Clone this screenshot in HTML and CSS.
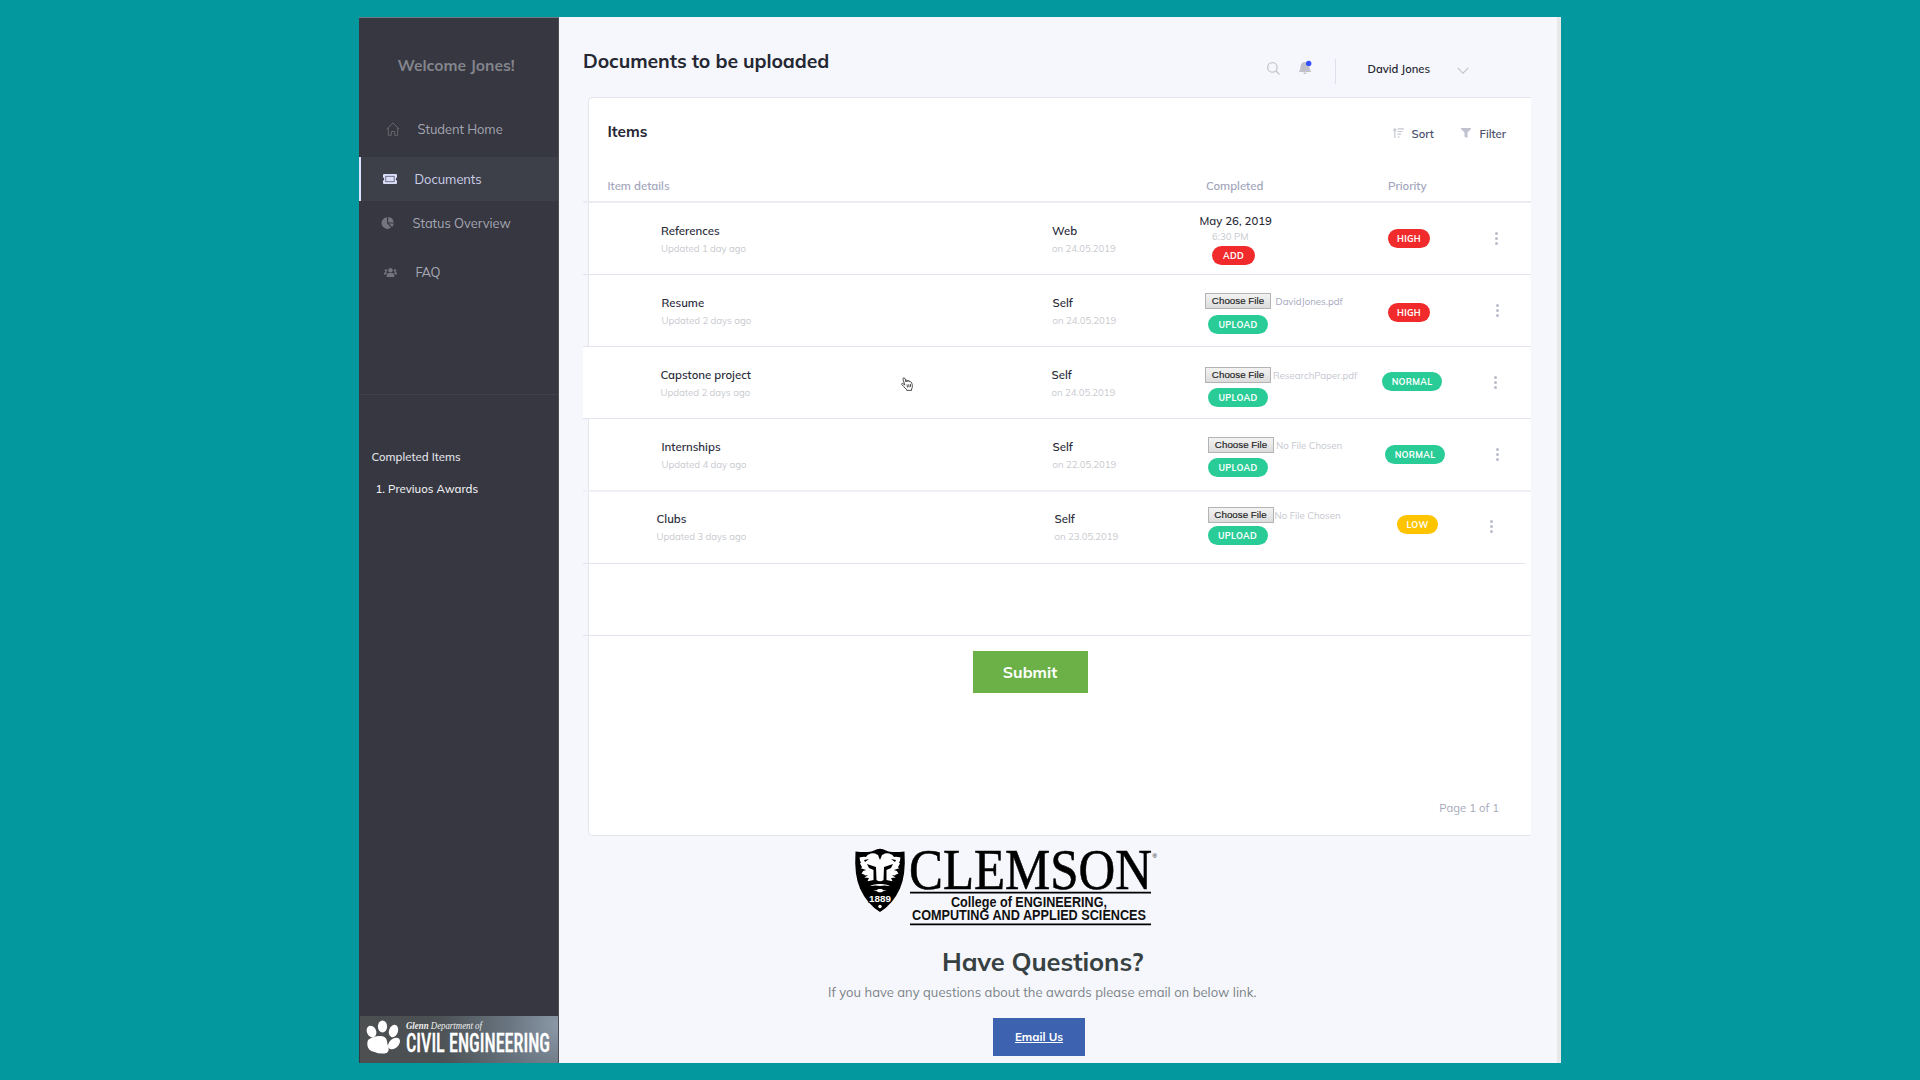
FILE: index.html
```
<!DOCTYPE html>
<html lang="en">
<head>
<meta charset="utf-8">
<title>Documents to be uploaded</title>
<link rel="stylesheet" href="styles.css">
</head>
<body>
<div class="window">
  <aside class="sidebar">
    <div class="welcome">Welcome Jones!</div>
    <nav class="nav">
      <a class="nav-item nav-item--home">
        <svg class="nav-icon" width="14" height="14" viewBox="0 0 14 14" fill="none" stroke="#66676d" stroke-width="1"><path d="M.7 7.2 7 .9l6.300 6.300M2.300 6v7.300h3V9.500h3.400v3.800h3V6"/></svg>
        <span>Student Home</span>
      </a>
      <a class="nav-item nav-item--documents">
        <svg class="nav-icon" width="14" height="10" viewBox="0 0 14 10"><path fill="#d9dcf8" d="M1 0h12q1 0 1 1v2.500q-1.200 0-1.200 1.500T14 6.500V9q0 1-1 1H1q-1 0-1-1V6.500Q1.200 6.500 1.200 5T0 3.500V1q0-1 1-1z"/><rect x="2.800" y="2.300" width="8.400" height="5.400" fill="none" stroke="#5b5c6b" stroke-width=".8"/></svg>
        <span>Documents</span>
      </a>
      <a class="nav-item nav-item--status">
        <svg class="nav-icon" width="13" height="12" viewBox="0 0 13 12" fill="#74757e"><path d="M6 .3v6l4 4.300A5.800 5.800 0 1 1 6 .3z"/><path d="M7.200 0a5.600 5.600 0 0 1 5.500 5.400H7.200z"/><path d="M7.900 6.500h4.800a5.600 5.600 0 0 1-1.600 3.500z"/></svg>
        <span>Status Overview</span>
      </a>
      <a class="nav-item nav-item--faq">
        <svg class="nav-icon" width="13" height="9" viewBox="0 0 13 9" fill="#74757e"><circle cx="6.500" cy="2.300" r="2.200"/><circle cx="2" cy="2.500" r="1.300"/><circle cx="11" cy="2.500" r="1.300"/><path d="M2.700 9V7.300Q3 5 5 5h3q2 0 2.300 2.300V9zM0 6.500V5.300q.3-1.100 1.300-1.100h1.600L2.200 6.500zM13 6.500V5.300q-.3-1.100-1.300-1.100h-1.600l.7 2.300z"/></svg>
        <span>FAQ</span>
      </a>
    </nav>
    <div class="completed">
      <div class="completed-title">Completed Items</div>
      <div class="completed-item">1. Previuos Awards</div>
    </div>
    <div class="department">
      <svg width="198" height="47" viewBox="0 0 198 47">
        <g fill="#fff">
          <ellipse cx="11.500" cy="15.500" rx="4.600" ry="6" transform="rotate(-25 11.500 15.500)"/>
          <ellipse cx="22.500" cy="10.500" rx="4.600" ry="6"/>
          <ellipse cx="33.500" cy="15" rx="4.500" ry="6.300" transform="rotate(20 33.500 15)"/>
          <ellipse cx="34" cy="27.500" rx="4.600" ry="7" transform="rotate(48 34 27.500)"/>
          <path d="M8 24q5-4 12-4 6 0 7 5 0 3 1.500 6 1 6-4 6.500-6 .5-10-1.500-6-1-7-6-.5-4 .5-6z"/>
        </g>
        <text class="dept-small" x="46" y="12.500" textLength="76" lengthAdjust="spacingAndGlyphs"><tspan class="dept-bold">Glenn</tspan> Department of</text>
        <text class="dept-large" x="46" y="36" textLength="144" lengthAdjust="spacingAndGlyphs">CIVIL ENGINEERING</text>
      </svg>
    </div>
  </aside>
  <main class="main">
    <header class="header">
      <h1 class="page-title">Documents to be uploaded</h1>
      <div class="tools">
        <svg class="search" width="13" height="13" viewBox="0 0 13 13" fill="none" stroke="#c5c6cc" stroke-width="1.300"><circle cx="5.400" cy="5.400" r="4.700"/><path d="m8.800 8.800 3.700 3.700"/></svg>
        <svg class="bell" width="14" height="15" viewBox="0 0 14 15"><path fill="#c1c2c9" d="M5.500 2q5 0 5 5 0 3 1.500 4.300v.7H0v-.7Q1.500 10 1.500 7q0-4.500 4-5zM4.200 12.500h3.500q-.3 1.500-1.700 1.500t-1.800-1.500z"/><circle cx="9.700" cy="3.400" r="2.700" fill="#3751ff"/></svg>
        <span class="tool-divider"></span>
        <span class="user">David Jones</span>
        <svg class="chevron" width="12" height="8" viewBox="0 0 12 8" fill="none" stroke="#c5c6cc" stroke-width="1.200"><path d="m.7.900 5.300 5.300L11.300.900"/></svg>
      </div>
    </header>
    <section class="card">
      <div class="card-head">
        <h2 class="card-title">Items</h2>
        <svg class="sort-icon" width="11" height="10" viewBox="0 0 11 10" fill="none" stroke="#c5c7d2" stroke-width="1.200"><path d="M1.800 10V1M.3 2.500 1.800.800l1.500 1.700M4.500.800H11M4.500 3.500h5M4.500 6.200h3.500M4.500 9h2.200"/></svg>
        <span class="action action--sort">Sort</span>
        <svg class="filter-icon" width="10" height="10" viewBox="0 0 10 10" fill="#c0c2cf"><path d="M0 0h10v1L6.500 4.500V10l-3-1.200V4.500L0 1z"/></svg>
        <span class="action">Filter</span>
      </div>
      <div class="table">
        <div class="row row--head">
          <span class="th th--details">Item details</span><span></span><span class="th th--completed">Completed</span><span class="th th--priority">Priority</span>
        </div>
        <div class="row row--references">
          <div class="cell cell--name"><div class="name">References</div><div class="sub">Updated 1 day ago</div></div>
          <div class="cell cell--source"><div class="name">Web</div><div class="sub">on 24.05.2019</div></div>
          <div class="cell cell--file"><div class="date">May 26, 2019</div><div class="time">6:30 PM</div><span class="pill pill--red">ADD</span></div>
          <div class="cell cell--priority"><span class="pill pill--red">HIGH</span></div>
          <div class="cell cell--menu"><i></i><i></i><i></i></div>
        </div>
        <div class="row row--resume">
          <div class="cell cell--name"><div class="name">Resume</div><div class="sub">Updated 2 days ago</div></div>
          <div class="cell cell--source"><div class="name">Self</div><div class="sub">on 24.05.2019</div></div>
          <div class="cell cell--file"><div class="picker"><span class="choose">Choose File</span><span class="filename filename--dark">DavidJones.pdf</span></div><span class="pill pill--green">UPLOAD</span></div>
          <div class="cell cell--priority"><span class="pill pill--red">HIGH</span></div>
          <div class="cell cell--menu"><i></i><i></i><i></i></div>
        </div>
        <div class="row row--capstone">
          <div class="cell cell--name"><div class="name">Capstone project</div><div class="sub">Updated 2 days ago</div></div>
          <div class="cell cell--source"><div class="name">Self</div><div class="sub">on 24.05.2019</div></div>
          <div class="cell cell--file"><div class="picker"><span class="choose">Choose File</span><span class="filename">ResearchPaper.pdf</span></div><span class="pill pill--green">UPLOAD</span></div>
          <div class="cell cell--priority"><span class="pill pill--green">NORMAL</span></div>
          <div class="cell cell--menu"><i></i><i></i><i></i></div>
          <svg class="pointer" width="13" height="14" viewBox="0 0 13 14" fill="#fff" stroke="#3c3c40" stroke-width=".9" stroke-linejoin="round"><path d="M3.800 8 2 2.300Q1.800.800 3 .800q.8 0 1.100 1L5.200 5l-.3-1.500q1-.9 1.700.2l.3 1-.1-1q1.200-.7 1.700.3l.3 1q1.200-.7 1.700.4.900 2.300.9 4.100 0 1.500-.9 2.500l.1 1.400H5.700L5.500 12.300Q3.500 11 2.600 9.300L.8 7.500q-.4-1.200.8-1.200z"/><path d="m6 7.500.5 3M7.700 7.300l.4 3M9.300 7l.3 3" /></svg>
        </div>
        <div class="row row--internships">
          <div class="cell cell--name"><div class="name">Internships</div><div class="sub">Updated 4 day ago</div></div>
          <div class="cell cell--source"><div class="name">Self</div><div class="sub">on 22.05.2019</div></div>
          <div class="cell cell--file"><div class="picker"><span class="choose">Choose File</span><span class="filename">No File Chosen</span></div><span class="pill pill--green">UPLOAD</span></div>
          <div class="cell cell--priority"><span class="pill pill--green">NORMAL</span></div>
          <div class="cell cell--menu"><i></i><i></i><i></i></div>
        </div>
        <div class="row row--clubs">
          <div class="cell cell--name"><div class="name">Clubs</div><div class="sub">Updated 3 days ago</div></div>
          <div class="cell cell--source"><div class="name">Self</div><div class="sub">on 23.05.2019</div></div>
          <div class="cell cell--file"><div class="picker"><span class="choose">Choose File</span><span class="filename">No File Chosen</span></div><span class="pill pill--green">UPLOAD</span></div>
          <div class="cell cell--priority"><span class="pill pill--yellow">LOW</span></div>
          <div class="cell cell--menu"><i></i><i></i><i></i></div>
        </div>
        <div class="row row--empty"></div>
      </div>
      <div class="submit">Submit</div>
      <div class="paging">Page 1 of 1</div>
    </section>
    <footer class="footer">
      <svg class="logo" width="304" height="80" viewBox="0 0 304 80">
        <path d="M.5 3.500Q14 5 19 2.500q6-3.500 12 0Q36 5 49.500 3.500q1.500 24-4.500 37Q38 56 25 64 12 56 5 40.500-1 27 .5 3.500z"/>
        <path fill="#fff" d="M4.500 9.500q4-1 6.500-.5 3-4.500 9-3.500l3 1.500 2 5 2-5 3-1.500q6-1 9 3.500 2.500-.5 6.500.5-.3 3.500-1.500 5l1 1-2 3.500 1.500 2-2.500 2.500 1.500 2-3.500 1.500 1 2.500-5 .5 1.500 3-6 .5L36 40H14l4.500-6.500-6-.5 1.500-3-5-.5 1-2.500-3.500-1.500 1.500-2-2.500-2.500 1.500-2-2-3.500 1-1q-1.200-1.500-1.500-5z"/>
        <path d="m12 16 9 3 .5 13q3.500 2.500 7 0l.5-13 9-3-2 4-4.500 2v10l4.500 1 1 5.500q-6-3-12-2.500-6-.5-12 2.500l1-5.500 4.500-1V22L14 20z"/>
        <path d="m5 20 6 2-4 1.500zM45 20l-6 2 4 1.500zM7 28l6-1-4 3zM43 28l-6-1 4 3zM9 12l5-1-4 3zM41 12l-5-1 4 3z"/>
        <path d="M11 39.500q7-3 14-1.500 7-1.500 14 1.500L35 46H15z"/>
        <path fill="#fff" d="M18 42.500q4 0 5.500-1.500h3q1.500 1.500 5.500 1.500-4 0-5.500 1.700h-3Q22 42.500 18 42.500z"/>
        <circle cx="25" cy="58.500" r="1.700" fill="#fff"/>
        <text class="logo-year" x="25" y="54" textLength="22" lengthAdjust="spacingAndGlyphs" text-anchor="middle">1889</text>
        <text class="logo-name" x="54" y="41" textLength="243" lengthAdjust="spacingAndGlyphs">CLEMSON</text>
        <text class="logo-mark" x="297.500" y="10">®</text>
        <path d="M55 43.700h241v1.800H55zM55 75.400h241v1.800H55z"/>
        <text class="logo-sub" x="96" y="58.700" textLength="156" lengthAdjust="spacingAndGlyphs">College of ENGINEERING,</text>
        <text class="logo-sub" x="57" y="72" textLength="234" lengthAdjust="spacingAndGlyphs">COMPUTING AND APPLIED SCIENCES</text>
      </svg>
      <h2 class="question">Have Questions?</h2>
      <p class="question-text">If you have any questions about the awards please email on below link.</p>
      <a class="email">Email Us</a>
    </footer>
  </main>
</div>
</body>
</html>
```
FILE: styles.css
```
* { box-sizing: border-box; }
body {
  margin: 0;
  height: 1080px;
  overflow: hidden;
  padding: 17px 359px;
  background: #03989e;
  font-family: Mulish, Lato, sans-serif;
  white-space: nowrap;
}
h1, h2, p { margin: 0; }
svg { display: block; flex: none; }
.window { display: flex; height: 1046px; background: #f6f7fc; border-right: 4px solid #e8e8e9; width: 1202px; }

.sidebar { display: flex; flex-direction: column; width: 200px; background: #363740; border-top: 1px solid #6d7c85; border-right: 1px solid #4b4c54; }
.welcome { padding: 37px 0 0 38.500px; font-size: 15.600px; line-height: 20px; font-weight: 700; color: #84858d; letter-spacing: -.02px; }
.nav { height: 288px; margin-top: 32px; border-bottom: 1px solid #3f4049; }
.nav-item { display: flex; align-items: center; height: 44px; font-size: 12.900px; color: #a4a6b3; font-weight: 400; letter-spacing: -.05px; }
.nav-item--home { padding-left: 27px; height: 44px; gap: 17.500px; margin-bottom: 6px; }
.nav-item--documents { padding-left: 22px; height: 44px; gap: 17.500px; border-left: 2px solid #dde2ff; background: #3e4049; color: #ccd0eb; }
.nav-item--status { padding-left: 22px; gap: 18.500px; }
.nav-item--faq { padding-left: 25px; gap: 18.500px; margin-top: 5px; letter-spacing: -.4px; }
.completed { padding: 54px 0 0 12.500px; font-size: 11.400px; line-height: 16px; font-weight: 500; color: #e4e4ea; letter-spacing: .02px; }
.completed-title { margin-bottom: 16px; }
.completed-item { padding-left: 4px; color: #f0f0f4; }
.department { margin: auto 0 0 1px; background: radial-gradient(circle at 100% 20%, #8b98a6 0, #68747f 25%, #4b5154 60%, #4d4f50 100%); }
.dept-small { font: italic 10px "Liberation Serif", serif; fill: #f0f0f0; }
.dept-bold { font-weight: 700; }
.dept-large { font: 500 26px "Roboto Condensed", "Liberation Sans", sans-serif; fill: #fff; stroke: #fff; stroke-width: .3px; }

.main { width: 998px; padding: 0 26px 0 24px; display: flex; flex-direction: column; }
.header { display: flex; justify-content: space-between; align-items: flex-start; height: 80px; }
.page-title { margin-top: 31.500px; font-size: 19.400px; line-height: 24px; font-weight: 700; color: #252733; letter-spacing: -.1px; }
.tools { display: flex; align-items: flex-start; width: 264px; height: 25px; margin-top: 42px; }
.search { margin-top: 2.500px; }
.bell { margin: 1px 0 0 18.500px; }
.tool-divider { width: 1px; height: 25px; margin-left: 22px; background: #dfe0eb; }
.user { width: 63px; margin: 2px 0 0 32px; font-size: 11.200px; line-height: 16px; font-weight: 600; color: #252733; }
.chevron { margin: 8px 0 0 26.500px; }

.card { height: 739px; margin-left: 5px; background: #fff; border: 1px solid #e3e4ec; border-right: 0; border-radius: 5px 0 0 5px; }
.card-head { display: flex; align-items: flex-start; height: 72px; padding: 24px 25px 0 18.500px; }
.card-title { flex: 1; font-size: 15.300px; line-height: 20px; font-weight: 700; color: #252733; }
.action { font-size: 11.300px; line-height: 16px; margin-top: 4px; font-weight: 600; color: #4b506d; }
.sort-icon { margin: 6px 7px 0 0; }
.filter-icon { margin: 6px 8px 0 0; }
.action--sort { width: 50px; }

.table { margin-left: -6px; }
.row { position: relative; display: grid; grid-template-columns: 469px 147px 183px 109px 1fr; height: 72px; border-bottom: 1px solid #e1e3ef; }
.row--head { height: 33px; border-bottom: 2px solid #eaebf3; font-size: 11.400px; line-height: 16px; font-weight: 600; color: #a2a5bb; padding-top: 8px; }
.th--details { padding-left: 24.500px; }
.th--completed { padding-left: 7px; }
.th--priority { padding-left: 6px; }
.row--capstone { background: #fff; }
.row--internships { height: 73px; border-bottom: 2px solid #eff0f6; }
.cell--name, .cell--source { padding-top: 20px; }
.cell--name { padding-left: 78px; }
.name { font-size: 11.400px; line-height: 16px; font-weight: 600; color: #2b2d3b; }
.sub { font-size: 9.600px; line-height: 16px; margin-top: 1px; color: #c9cad0; letter-spacing: -.02px; }
.date { padding: 10px 0 0 .5px; font-size: 11.400px; line-height: 16px; font-weight: 500; color: #252733; }
.time { padding-left: 13px; font-size: 9.600px; line-height: 14px; color: #c9cad0; }
.pill { display: block; width: max-content; height: 19px; padding: 0 10.200px; border-radius: 10px; font-size: 8.800px; line-height: 19px; font-weight: 700; letter-spacing: .3px; color: #fff; }
.pill--red { background: #f12b2c; }
.pill--green { background: #29cc97; }
.pill--yellow { background: #fec400; }
.picker { display: flex; align-items: center; height: 16px; }
.choose { width: 66px; height: 16px; border: 1px solid #b3b3b3; background: linear-gradient(#f3f3f3, #dcdcdc); font: 9.800px/14px "Liberation Sans", Arial, sans-serif; color: #222; text-align: center; -webkit-text-stroke: .15px #222; }
.filename { margin-left: 2px; font-size: 9.600px; line-height: 16px; color: #c6c8d0; }
.filename--dark { color: #a5a8be; margin-left: 4.500px; }
.cell--menu { display: flex; flex-direction: column; gap: 2px; }
.cell--menu i { width: 3px; height: 3px; border-radius: 50%; background: #b9bbc8; }

.cell--priority .pill { width: 60px; padding: 0; text-align: center; }
.cell--priority .pill--red { width: 42px; }
.cell--priority .pill--yellow { width: 41px; }
.cell--file .pill { width: 60px; padding: 0; text-align: center; }
.cell--file .pill--red { width: 43px; }

.row--references .cell--file .pill { margin: 3px 0 0 13px; }
.row--references .cell--priority { padding: 26px 0 0 6px; }
.row--references .cell--menu { padding: 29px 0 0 3.500px; }

.row--resume .cell--name { padding-left: 78.500px; }
.row--resume .cell--source { padding-left: .5px; }
.row--resume .cell--file { padding: 18px 0 0 6px; }
.row--resume .cell--file .pill { margin: 6px 0 0 3px; }
.row--resume .cell--priority { padding: 28px 0 0 6px; }
.row--resume .cell--menu { padding: 29px 0 0 4.500px; }

.row--capstone .cell--name { padding-left: 77.500px; }
.row--capstone .cell--source { margin-left: -.5px; }
.row--capstone .cell--file { padding: 20px 0 0 6px; }
.row--capstone .cell--file .pill { margin: 5px 0 0 3px; }
.row--capstone .cell--priority { padding-top: 25px; }
.row--capstone .cell--menu { padding: 29px 0 0 2.500px; }

.row--internships .cell--name { padding-left: 78.500px; }
.row--internships .cell--source { padding-left: .5px; }
.row--internships .cell--file { padding: 18px 0 0 9px; }
.row--internships .cell--file .pill { margin-top: 5px; }
.row--internships .cell--priority { padding: 26px 0 0 3px; }
.row--internships .cell--menu { padding: 29px 0 0 4.500px; }

.row--clubs { width: 942px; }
.row--clubs .cell--name { padding: 19px 0 0 73.500px; }
.row--clubs .cell--source { padding: 19px 0 0 2.500px; }
.row--clubs .cell--file { padding: 15px 0 0 8.500px; }
.row--clubs .cell--file .filename { margin-left: 1px; }
.row--clubs .cell--file .pill { margin-top: 3px; }
.row--clubs .cell--priority { padding: 23px 0 0 15px; }
.row--clubs .cell--menu { padding-top: 28px; margin-left: -1px; }

.pointer { position: absolute; left: 318px; top: 30px; }

.submit { width: 115px; height: 42px; margin: 15px 0 0 383.500px; background: #6cb147; color: #fff; font-size: 16px; line-height: 42px; font-weight: 700; text-align: center; }
.paging { margin-top: 107px; padding-right: 32px; text-align: right; font-size: 11.300px; line-height: 16px; color: #a6a8ba; letter-spacing: .02px; }

.footer { display: flex; flex-direction: column; }
.logo { margin: 12px 0 0 272px; overflow: visible; }
.logo-year { font: 700 9px "Liberation Sans", sans-serif; fill: #fff; stroke: #000; stroke-width: 2px; paint-order: stroke; }
.logo-name { font: 58px "Liberation Serif", serif; stroke: #000; stroke-width: .6px; }
.logo-mark { font: 6px "Liberation Sans", sans-serif; }
.logo-sub { font: 700 14px "Liberation Sans", sans-serif; fill: #111; }
.question { margin: 16px 0 0 359px; font-size: 25.500px; line-height: 34px; font-weight: 700; color: #374142; letter-spacing: -.1px; }
.question-text { margin: 4px 0 0 245px; font-size: 13px; line-height: 20px; color: #7b8487; letter-spacing: .03px; }
.email { width: 92px; height: 38px; margin: 16px 0 0 410px; background: #3c62b0; color: #fff; font-size: 11.600px; line-height: 38px; font-weight: 700; text-align: center; text-decoration: underline; }
```
